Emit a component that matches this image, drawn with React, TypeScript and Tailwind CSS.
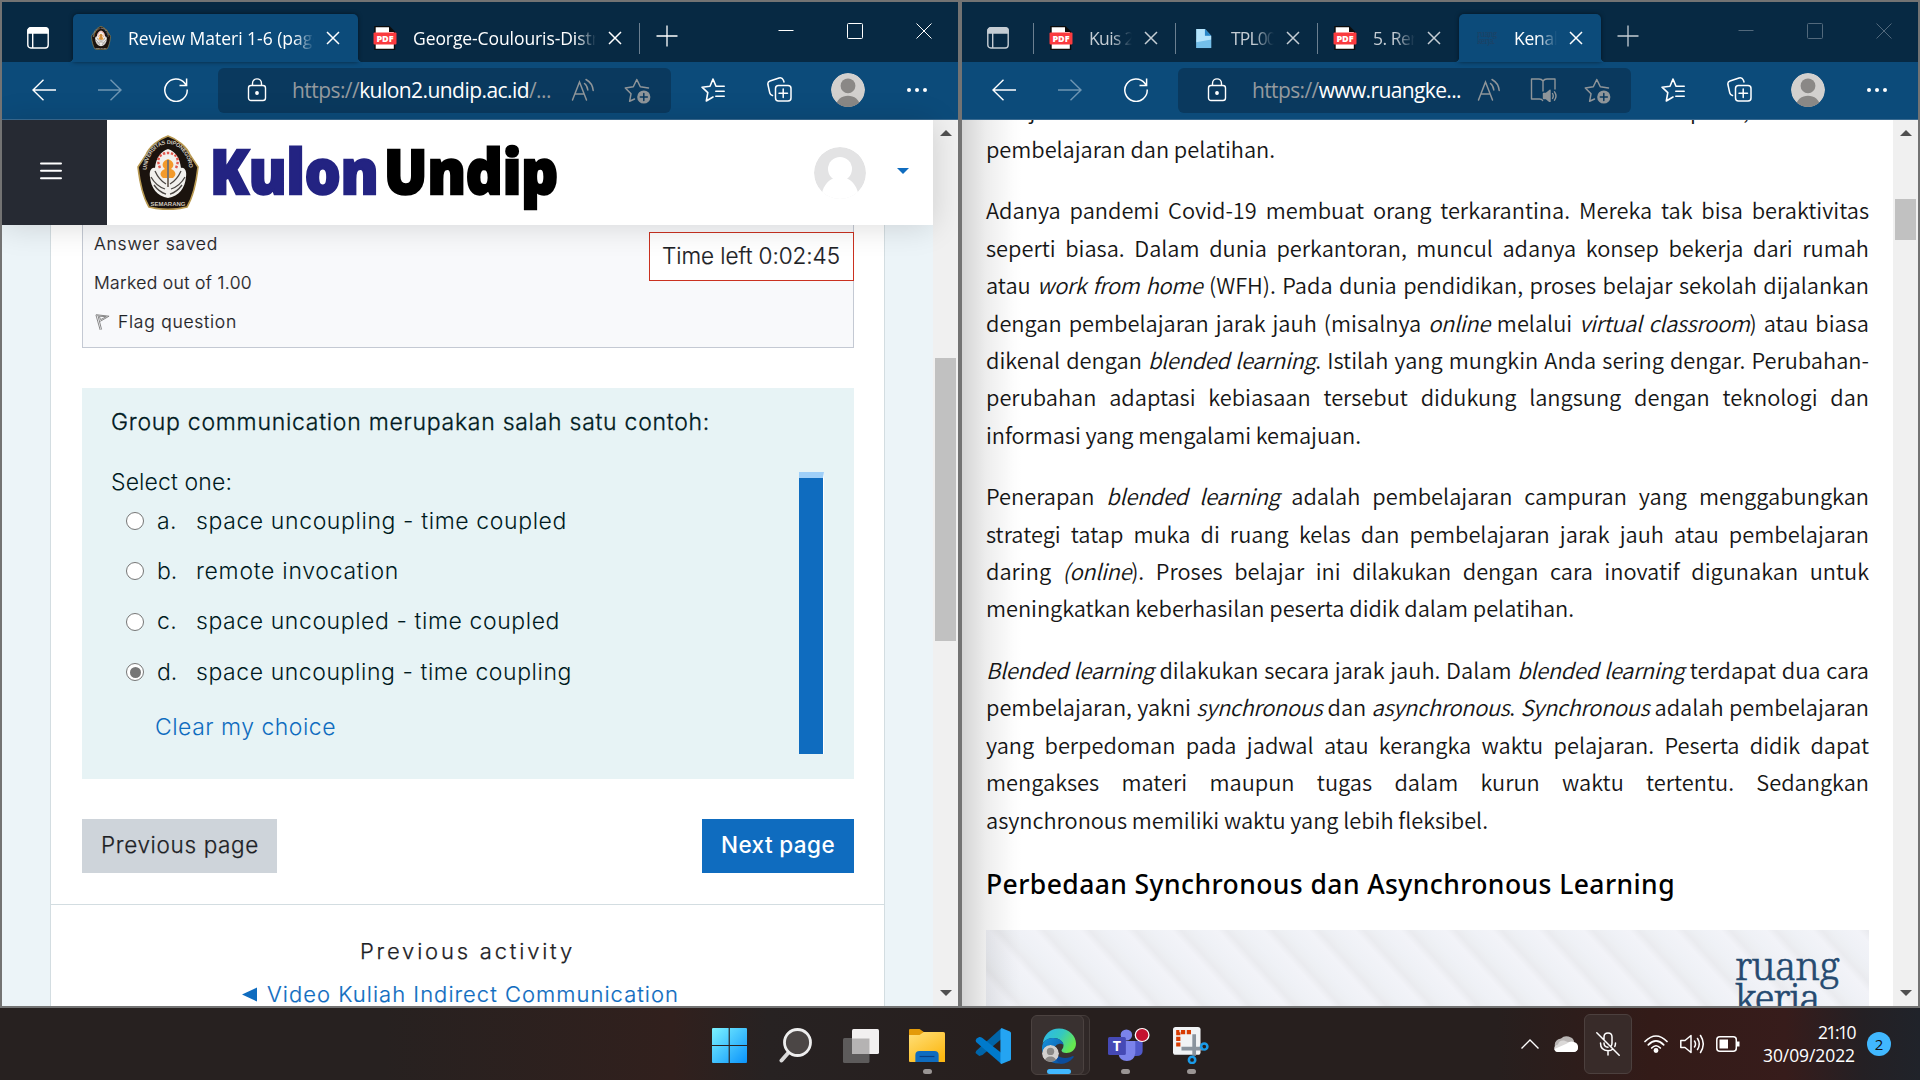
import { useLayoutEffect, useRef, useState, type ReactNode } from "react";

/* Text run whose tracking is computed so that it spans exactly `w` pixels. */
function Fit({ w, className = "", children }: { w: number; className?: string; children: ReactNode }) {
  const ref = useRef<HTMLSpanElement>(null);
  const [ls, setLs] = useState(0);
  useLayoutEffect(() => {
    const el = ref.current;
    if (!el) return;
    const n = (el.textContent || "").length;
    setLs((w - el.getBoundingClientRect().width) / Math.max(1, n));
  }, [w]);
  return (
    <span ref={ref} className={`inline-block whitespace-nowrap ${className}`} style={{ letterSpacing: `${ls}px` }}>
      {children}
    </span>
  );
}

function Crest({ className }: { className: string }) {
  return (
    <svg viewBox="0 0 62 75" className={className}>
      <defs>
        <path id="crestArc" d="M9.500 35 C10.500 20 20 9 31 9 C42 9 51.500 20 52.500 35" />
      </defs>
      <path d="M31 1 C40 4 50 12 53 20 L61 32 C59 50 56 62 50 72 C38 75 24 75 12 72 C6 62 3 50 1 32 L9 20 C12 12 22 4 31 1Z" fill="#1b130e" stroke="#b99a52" strokeWidth="1.6" />
      <path d="M31 14 C24 16 19 23 18 33 C14 32 12 37 13 42 C14 53 20 61 31 63 C42 61 48 53 49 42 C50 37 48 32 44 33 C43 23 38 16 31 14Z" fill="#f2f0ed" />
      <path d="M18 36 q4 9 11 13 M14 42 q5 9 14 12 M17 50 q5 7 12 9 M44 36 q-4 9-11 13 M48 42 q-5 9-14 12 M45 50 q-5 7-12 9" stroke="#4a4542" strokeWidth="1.3" fill="none" />
      <path d="M23 33 C18 22 25 18 31 18 C37 18 44 22 39 33" fill="none" stroke="#e2574c" strokeWidth="2.4" strokeDasharray="2.4 1.6" />
      <path d="M31 24 C25 26 24 31 28 34 C23 36 22 40 26 43 L36 43 C40 40 39 36 34 34 C38 31 37 26 31 24Z" fill="#f39a2b" />
      <path d="M31 25 V52" stroke="#7d746c" strokeWidth="2" />
      <text fontFamily="Liberation Sans" fontSize="5.6" fontWeight="700" fill="#cfc8bf">
        <textPath href="#crestArc" textLength="72">UNIVERSITAS DIPONEGORO</textPath>
      </text>
      <text x="31" y="70.500" textAnchor="middle" fontFamily="Liberation Sans" fontSize="6" fontWeight="700" fill="#cfc8bf">SEMARANG</text>
    </svg>
  );
}

const PdfIcon = () => (
  <svg viewBox="0 0 24 24" className="mr-[2px] h-6 w-6">
    <path d="M2 0.5H16L21.5 6V23.5H2Z" fill="#fff" stroke="#0a0a0a" strokeWidth="1.4" />
    <path d="M16 0.5V6H21.5Z" fill="#0a0a0a" />
    <rect x="0.5" y="6.5" width="23" height="12" rx="1" fill="#fb3b3f" />
    <text x="12" y="16" textAnchor="middle" textLength="17" fontFamily="Open Sans" fontWeight="800" fontSize="9" fill="#fff">PDF</text>
  </svg>
);

const FileIcon = () => (
  <svg viewBox="0 0 18 22" className="h-[21px] w-[18px]">
    <path d="M1 1H10L16.5 8V21H1Z" fill="#8fd3f7" />
    <path d="M1 12H16.5V21H1Z" fill="#74bfea" />
    <path d="M1 1H10V8H16.5V12L1 15Z" fill="#b5e4fc" />
    <path d="M10 1L16.5 8H10Z" fill="#2a86c8" />
  </svg>
);

const RuangFav = () => (
  <svg viewBox="0 0 20 16" className="h-4 w-5 font-['Noto_Serif','Liberation_Serif',serif]" fill="#1e4163">
    <text x="0" y="6.500" fontSize="8" textLength="20">ruang</text>
    <text x="0" y="14" fontSize="8" textLength="18">kerja.</text>
  </svg>
);

const CloseX = () => (
  <svg viewBox="0 0 14 14" className="h-[14px] w-[14px]" fill="none" stroke="currentColor" strokeWidth="1.5">
    <path d="M1 1L13 13M13 1L1 13" />
  </svg>
);

function Tab({ icon, title, active, divider, w }: { icon: ReactNode; title: ReactNode; active?: boolean; divider?: boolean; w: string }) {
  return (
    <div className={`relative flex h-12 shrink-0 items-center ${w} ${active ? "rounded-t-[5px] bg-[#0c4b7a] text-white shadow-[0_0_4px_rgba(0,0,0,0.5)]" : ""}`}>
      {active && <span className="absolute bottom-0 -left-[5px] h-[5px] w-[5px] bg-[radial-gradient(circle_at_0_0,transparent_5px,#0c4b7a_5.5px)]" />}
      {active && <span className="absolute -right-[5px] bottom-0 h-[5px] w-[5px] bg-[radial-gradient(circle_at_100%_0,transparent_5px,#0c4b7a_5.5px)]" />}
      <div className="flex w-[55px] shrink-0 justify-center">{icon}</div>
      <div className="min-w-0 flex-1 overflow-hidden text-[17.5px] leading-6 whitespace-nowrap [mask-image:linear-gradient(to_right,black_calc(100%-20px),transparent)]">{title}</div>
      <div className="flex w-[44px] shrink-0 justify-center pr-[6px]">
        <CloseX />
      </div>
      {divider && <span className="absolute top-[9px] right-0 h-[31px] w-px bg-[#6b7f90]" />}
    </div>
  );
}

const ReadAloud = () => (
  <svg viewBox="0 0 24 24" className="h-6 w-6" fill="none" stroke="#8f9599" strokeWidth="1.5" strokeLinecap="round">
    <path d="M1.5 22L8.5 4L15.5 22M4 16H13" />
    <path d="M13.5 5.5C15.5 7 16.5 9 16.8 12M15 1.5C19.5 4 21.8 8 22.2 12.5" />
  </svg>
);

const StarAdd = () => (
  <svg viewBox="0 0 27 26" className="h-[26px] w-[27px]" fill="none" stroke="#8f9599" strokeWidth="1.5" strokeLinejoin="round" strokeLinecap="round">
    <path d="M24.5 10L16.3 8.8L12.8 1.5L9.3 8.8L1.3 10L7 15.8L5.6 23.3L10.5 21" />
    <circle cx="19.8" cy="19" r="6.6" fill="#8f9599" stroke="none" />
    <path d="M19.8 15.5V22.5M16.3 19H23.3" stroke="#0b395e" />
  </svg>
);

const Book = () => (
  <svg viewBox="0 0 27 24" className="h-6 w-[27px]" fill="none" stroke="#8f9599" strokeWidth="1.4" strokeLinejoin="round" strokeLinecap="round">
    <path d="M13 3C12 1.5 10.5 1 9 1H1.5V21H9.5C11 21 12.2 21.5 12.6 22.5M13 3V13M13 3C14 1.5 15.5 1 17 1H25V11" />
    <path d="M13.5 15.5H16L20 12.2V23.8L16 20.5H13.5Z" fill="#8f9599" />
    <path d="M22.5 15.5Q24 18 22.5 20.5M24.5 13.8Q27.5 18 24.5 22.2" />
  </svg>
);

const Person = ({ size }: { size: string }) => (
  <svg viewBox="0 0 34 34" className={`rounded-full ${size}`}>
    <circle cx="17" cy="17" r="17" fill="#d2d0ce" />
    <circle cx="17" cy="12.8" r="7.4" fill="#8a8886" />
    <path d="M5 34C5 19 29 19 29 34Z" fill="#8a8886" />
  </svg>
);

function Browser({ tabs, url, right }: { tabs: ReactNode; url: ReactNode; right?: boolean }) {
  return (
    <div className={`shrink-0 font-['Open_Sans',sans-serif] ${right ? "text-[#c5cdd4]" : "text-white"}`}>
      <div className="flex h-[60px] bg-[#072943] pt-3">
        <div className="flex h-12 w-[71px] shrink-0 items-center justify-center">
          <svg viewBox="0 0 22 22" className="h-[22px] w-[22px]" fill="none" stroke="currentColor" strokeWidth="1.4">
            <rect x="0.8" y="0.8" width="20.4" height="20.2" rx="3" />
            <path d="M1 6V3.5Q1 1 3.5 1H18.5Q21 1 21 3.5V6Z" fill="currentColor" />
            <path d="M5.7 6V21" />
          </svg>
        </div>
        {tabs}
        <div className="flex h-12 w-[54px] shrink-0 items-center justify-center pb-1">
          <svg viewBox="0 0 22 22" className="h-[22px] w-[22px]" stroke="currentColor" strokeWidth="1.3">
            <path d="M11 0.5V21.5M0.5 11H21.5" />
          </svg>
        </div>
        <div className={`ml-auto flex h-[34px] items-center ${right ? "text-[#52697c]" : ""}`}>
          <svg viewBox="0 0 16 16" className="mr-[53px] h-4 w-4" stroke="currentColor">
            <path d="M0.5 7.5H15.5" />
          </svg>
          <svg viewBox="0 0 16 16" className="mr-[53px] h-4 w-4" fill="none" stroke="currentColor">
            <rect x="0.5" y="0.5" width="15" height="15" rx="1" />
          </svg>
          <svg viewBox="0 0 16 16" className="mr-[26px] h-4 w-4" stroke="currentColor">
            <path d="M0.5 0.5L15.5 15.5M15.5 0.5L0.5 15.5" />
          </svg>
        </div>
      </div>
      <div className="flex h-[58px] items-center border-b border-[#3a6a90] bg-[#0c4b7a] pb-0.5 pl-[9px] text-white">
        <div className="flex w-[66px] justify-center">
          <svg viewBox="0 0 24 22" className="h-[22px] w-6" fill="none" stroke="currentColor" strokeWidth="1.4">
            <path d="M24 11H1M11.5 0.8L1 11L11.5 21.2" />
          </svg>
        </div>
        <div className="flex w-[66px] justify-center text-[#6f96b3]">
          <svg viewBox="0 0 24 22" className="h-[22px] w-6" fill="none" stroke="currentColor" strokeWidth="1.4">
            <path d="M0 11H23M12.5 0.8L23 11L12.5 21.2" />
          </svg>
        </div>
        <div className="mr-[9px] flex w-[66px] justify-center">
          <svg viewBox="0 0 24 24" className="h-6 w-6" fill="none" stroke="currentColor" strokeWidth="1.5">
            <path d="M23.2 11.5A11.2 11.2 0 1 1 20.8 5.2L22.5 7.5M22.6 0.5V7.5H15.5" />
          </svg>
        </div>
        <div className="mt-px flex h-[45px] w-[453px] items-center rounded-[6px] bg-[#0a395e]">
          <div className="flex w-[74px] shrink-0 justify-center pb-px pl-1">
            <svg viewBox="0 0 20 24" className="h-6 w-5" fill="none" stroke="currentColor" strokeWidth="1.4">
              <rect x="1.5" y="7.5" width="17" height="15" rx="2.5" />
              <path d="M5.5 7.5V5.5C5.5 -0.7 14.5 -0.7 14.5 5.5V7.5" />
              <circle cx="10" cy="15" r="1.2" fill="currentColor" />
            </svg>
          </div>
          <div className="flex-1 text-[21px] leading-8 whitespace-nowrap text-[#949a9f]">{url}</div>
          <div className="flex w-[54px] justify-center pb-px">
            <ReadAloud />
          </div>
          {right && (
            <div className="flex w-[54px] justify-center">
              <Book />
            </div>
          )}
          <div className="mr-[7px] flex w-[54px] justify-center pt-0.5">
            <StarAdd />
          </div>
        </div>
        <div className="ml-[9px] flex w-[66px] justify-center">
          <svg viewBox="0 0 24 24" className="h-6 w-6" fill="none" stroke="currentColor" strokeWidth="1.6" strokeLinejoin="round" strokeLinecap="round">
            <path d="M15 8.2L12 1L9 8.2L1 9.2L6.8 14.6L5.3 23L12 19M15 8.2H23.2M14.8 13.2H23.2M14.8 18.2H23.2" />
          </svg>
        </div>
        <div className="flex w-[66px] justify-center">
          <svg viewBox="0 0 25 25" className="h-[25px] w-[25px]" fill="none" stroke="currentColor" strokeWidth="1.5" strokeLinejoin="round" strokeLinecap="round">
            <rect x="8.5" y="8.5" width="15.5" height="15.5" rx="3" />
            <path d="M16.2 12V20.5M12 16.2H20.5M5.5 18.5C4 18 3 17 2.8 16L0.9 7.5C0.6 5.5 1.5 4.5 3 4L12 1C14 0.4 15.5 1.2 16.3 3L17 5" />
          </svg>
        </div>
        <div className="flex w-[72px] justify-center">
          <Person size="h-[34px] w-[34px]" />
        </div>
        <div className="flex w-[66px] justify-center gap-[4px]">
          <span className="h-1 w-1 rounded-full bg-white" />
          <span className="h-1 w-1 rounded-full bg-white" />
          <span className="h-1 w-1 rounded-full bg-white" />
        </div>
      </div>
    </div>
  );
}

function Scrollbar({ thumb }: { thumb: string }) {
  return (
    <div className="relative flex w-[25px] shrink-0 flex-col items-center justify-between bg-[#f0f0f0] py-2.5">
      <svg viewBox="0 0 12 6" className="h-1.5 w-3">
        <path d="M6 0L12 6H0Z" fill="#505050" />
      </svg>
      <div className={`absolute left-[2px] w-[21px] bg-[#c1c1c1] ${thumb}`} />
      <svg viewBox="0 0 12 6" className="h-1.5 w-3">
        <path d="M6 6L12 0H0Z" fill="#505050" />
      </svg>
    </div>
  );
}

const options: [string, string, number, boolean][] = [
  ["a.", "space uncoupling - time coupled", 371, false],
  ["b.", "remote invocation", 203, false],
  ["c.", "space uncoupled - time coupled", 364, false],
  ["d.", "space uncoupling - time coupling", 376, true],
];

function Quiz() {
  return (
    <div className="flex min-h-0 flex-1 flex-col bg-[#ecf4f8] font-['Inter',sans-serif] font-light text-[#1d2125]">
      <header className="relative z-10 flex h-[105px] shrink-0 items-center bg-white shadow-[0_2px_30px_rgba(0,0,0,0.14)]">
        <div className="flex h-full w-[105px] items-center justify-center bg-[#262a33] pr-[8px]">
          <svg viewBox="0 0 22 18" className="mt-[-4px] h-[18px] w-[22px]" stroke="#fff" strokeWidth="2" strokeLinecap="round">
            <path d="M1 1.5H21M1 8.8H21M1 16.3H21" />
          </svg>
        </div>
        <Crest className="ml-[30px] h-[75px] w-[62px]" />
        <div className="ml-[11px] flex h-full w-[360px] pt-[4px] font-['Open_Sans',sans-serif] text-[62px] leading-[93px] font-extrabold whitespace-nowrap">
          <div className="w-[174px]">
            <span className="inline-block origin-left scale-x-[0.91] text-[#232382] [-webkit-text-stroke:2.5px_#232382]">Kulon</span>
          </div>
          <span className="inline-block origin-left scale-x-[0.925] text-black [-webkit-text-stroke:2.5px_black]">Undip</span>
        </div>
        <svg viewBox="0 0 52 52" className="ml-auto h-[52px] w-[52px] rounded-full">
          <circle cx="26" cy="26" r="26" fill="#e3e3e4" />
          <circle cx="26" cy="22" r="12" fill="#fff" />
          <path d="M7 52C8 40 13 34 20 31H32C39 34 44 40 45 52Z" fill="#fff" />
        </svg>
        <svg viewBox="0 0 12 6" className="mr-6 mb-[3px] ml-[31px] h-1.5 w-3">
          <path d="M0 0H12L6 6Z" fill="#0f6cbf" />
        </svg>
      </header>
      <main className="mr-[48px] ml-[48px] flex min-h-0 flex-1 flex-col border-x border-[#d3dde1] bg-white">
        <section className="relative mr-[30px] ml-[31px] h-[123px] shrink-0 border border-t-0 border-[#c4c9d3] bg-[#f8f9fb] pl-[11px] text-[17.5px] leading-[39px] font-[350] [-webkit-text-stroke:0.2px_#1d2125]">
          <div className="-mt-px"><Fit w={124}>Answer saved</Fit></div>
          <div><Fit w={158}>Marked out of 1.00</Fit></div>
          <div className="flex items-center">
            <svg viewBox="0 0 16 18" className="mr-2 ml-px h-[18px] w-[15px]" fill="none" stroke="#808080" strokeWidth="1">
              <path d="M1 1.5L5.5 17.5M3 1.5L7 17M1 1.2L15 2.8L5.5 8.3M4.5 2.8L6 6.5L12 3.3Z" />
            </svg>
            <Fit w={119}>Flag question</Fit>
          </div>
          <div className="absolute top-[7px] -right-px flex h-[49px] w-[205px] items-center border border-[#ca3120] bg-white pl-3 text-[22.5px] leading-none">
            <Fit w={178}>Time left 0:02:45</Fit>
          </div>
        </section>
        <section className="relative mr-[30px] ml-[31px] mt-10 h-[391px] shrink-0 bg-[#e7f3f5] pt-[14px] pl-[29px] text-[23px] text-[#001a1e]">
          <div className="leading-10 font-[350] [-webkit-text-stroke:0.3px_#001a1e]"><Fit w={599}>Group communication merupakan salah satu contoh:</Fit></div>
          <div className="mt-[25px] h-[29px] leading-[30px]"><Fit w={121}>Select one:</Fit></div>
          {options.map(([k, t, w, on]) => (
            <div key={k} className="flex h-[50.3px] items-center pl-[15px]">
              <span className="flex h-[18px] w-[18px] items-center justify-center rounded-full border border-[#767676] bg-white">
                {on && <span className="h-[11px] w-[11px] rounded-full bg-[#767676]" />}
              </span>
              <span className="w-[52px] pl-[13px]"><Fit w={20}>{k}</Fit></span>
              <Fit w={w}>{t}</Fit>
            </div>
          ))}
          <div className="h-[60px] pl-[44px] leading-[60px] text-[#0f6cbf]"><Fit w={181}>Clear my choice</Fit></div>
          <div className="absolute top-[84px] right-[30px] h-[282px] w-[25px] border-t-[6px] border-r border-t-[#9fcff8] border-r-white bg-[#0f6cbf]" />
        </section>
        <div className="mr-[30px] ml-[31px] mt-10 flex h-[54px] shrink-0 justify-between text-[22.5px] leading-[52px] font-[350]">
          <div className="w-[195px] bg-[#ced4da] pl-[19px] [-webkit-text-stroke:0.25px_#1d2125]"><Fit w={158}>Previous page</Fit></div>
          <div className="w-[152px] bg-[#0f6cbf] pl-[19px] font-medium text-white"><Fit w={114}>Next page</Fit></div>
        </div>
        <div className="mt-[31px] border-t border-[#d3dde1] pt-[25px] text-center text-[22px] font-[350]">
          <div className="leading-[42px] [-webkit-text-stroke:0.25px_#1d2125]"><Fit w={215}>Previous activity</Fit></div>
          <div className="flex h-[44px] items-center justify-center pr-[14px] leading-[44px] text-[#0f6cbf] [-webkit-text-stroke:0.2px_#0f6cbf]">
            <svg viewBox="0 0 16 15" className="mr-[10px] h-[15px] w-[15px]"><path d="M0 7.5L16 0V15Z" fill="#0f6cbf" /></svg>
            <Fit w={412}>Video Kuliah Indirect Communication</Fit>
          </div>
        </div>
      </main>
    </div>
  );
}

const Em = ({ children }: { children: ReactNode }) => <em className="tracking-[-0.3px]">{children}</em>;

const paragraphs: ReactNode[][] = [
  [
    "Adanya pandemi Covid-19 membuat orang terkarantina. Mereka tak bisa beraktivitas",
    "seperti biasa. Dalam dunia perkantoran, muncul adanya konsep bekerja dari rumah",
    <>atau <Em>work from home</Em> (WFH). Pada dunia pendidikan, proses belajar sekolah dijalankan</>,
    <>dengan pembelajaran jarak jauh (misalnya <Em>online</Em> melalui <Em>virtual classroom</Em>) atau biasa</>,
    <>dikenal dengan <Em>blended learning</Em>. Istilah yang mungkin Anda sering dengar. Perubahan-</>,
    "perubahan adaptasi kebiasaan tersebut didukung langsung dengan teknologi dan",
    "informasi yang mengalami kemajuan.",
  ],
  [
    <>Penerapan <Em>blended learning</Em> adalah pembelajaran campuran yang menggabungkan</>,
    "strategi tatap muka di ruang kelas dan pembelajaran jarak jauh atau pembelajaran",
    <>daring <Em>(online</Em>). Proses belajar ini dilakukan dengan cara inovatif digunakan untuk</>,
    "meningkatkan keberhasilan peserta didik dalam pelatihan.",
  ],
  [
    <><Em>Blended learning</Em> dilakukan secara jarak jauh. Dalam <Em>blended learning</Em> terdapat dua cara</>,
    <>pembelajaran, yakni <Em>synchronous</Em> dan <Em>asynchronous</Em>. <Em>Synchronous</Em> adalah pembelajaran</>,
    "yang berpedoman pada jadwal atau kerangka waktu pelajaran. Peserta didik dapat",
    "mengakses materi maupun tugas dalam kurun waktu tertentu. Sedangkan",
    "asynchronous memiliki waktu yang lebih fleksibel.",
  ],
];
const lastWidths = [375, 588, 502];

function Article() {
  return (
    <div className="relative min-h-0 flex-1 overflow-hidden bg-white pr-[24px] pl-6 font-['Noto_Sans_CJK_SC',sans-serif] text-[21.8px] leading-[37.42px] font-[350] text-[#161616]">
      <div className="-mt-[29.4px] mb-[2px] flex h-[37.4px] justify-between whitespace-nowrap">
        <span className="w-[702px] [text-align-last:justify]">belajar ini sudah bisa dilakukan melalui akses internet dan media komputer,</span>
        <span>serta di dalam</span>
      </div>
      <div><Fit w={289}>pembelajaran dan pelatihan.</Fit></div>
      {paragraphs.map((lines, i) => (
        <div key={i} className="mt-6">
          {lines.map((l, j) =>
            j < lines.length - 1 ? (
              <div key={j} className="h-[37.42px] [text-align-last:justify] whitespace-nowrap">{l}</div>
            ) : (
              <div key={j} className="h-[37.42px]"><Fit w={lastWidths[i]}>{l}</Fit></div>
            )
          )}
        </div>
      ))}
      <h2 className="mt-[27px] font-['Noto_Sans',sans-serif] text-[26.5px] leading-[38px] font-medium text-black">
        <Fit w={689}>Perbedaan Synchronous dan Asynchronous Learning</Fit>
      </h2>
      <div className="mt-[27px] flex h-[120px] justify-end bg-[repeating-linear-gradient(48deg,#eff1f6_0px,#f2f3f8_14px,#eaebef_21px,#edeff3_27px,#eff1f6_34px)] pt-[19px] pr-[29px]">
        <div className="w-[105px] font-['Noto_Serif','Liberation_Serif',serif] text-[39px] leading-[32px] text-[#254a70] [-webkit-text-stroke:0.6px_#254a70]">
          <Fit w={104}>ruang</Fit>
          <Fit w={84}>kerja</Fit>
        </div>
      </div>
      <div className="absolute inset-y-0 left-0 w-[60px] bg-[linear-gradient(to_right,rgba(0,0,0,0.17),rgba(0,0,0,0.07)_40%,rgba(0,0,0,0.01)_85%,transparent)]" />
    </div>
  );
}

function TaskIcon({ children, dot }: { children: ReactNode; dot?: boolean }) {
  return (
    <div className="relative flex h-[72px] w-[66px] shrink-0 items-center justify-center pt-[3px]">
      {children}
      {dot && <span className="absolute top-[61px] left-1/2 -ml-1 h-[5px] w-[9px] rounded-full bg-[#9a9594]" />}
    </div>
  );
}

function Taskbar() {
  return (
    <footer className="flex h-[72px] shrink-0 items-center bg-[linear-gradient(to_right,#272120_0%,#272120_20%,#31201d_35%,#272222_40%,#271f1e_52%,#271f1e_78%,#331b18_86%,#371c1b_93%,#242024_97%,#20232a_100%)]">
      <div className="ml-[696px] flex">
        <TaskIcon>
          <svg viewBox="0 0 33 35" preserveAspectRatio="none" className="h-[35px] w-[35px]">
            <defs>
              <linearGradient id="win" x1="0" y1="0" x2="1" y2="1"><stop offset="0" stopColor="#7cf3ff" /><stop offset="1" stopColor="#0a93fb" /></linearGradient>
            </defs>
            <path d="M1 0H15.7V17H0V1Q0 0 1 0ZM16.8 0H32Q33 0 33 1V17H16.8ZM0 18H15.7V35H1Q0 35 0 34ZM16.8 18H33V34Q33 35 32 35H16.8Z" fill="url(#win)" />
          </svg>
        </TaskIcon>
        <TaskIcon>
          <svg viewBox="0 0 33 35" className="h-[35px] w-[33px]" fill="none">
            <path d="M10 24L2.5 32.5" stroke="#d9d9d9" strokeWidth="4" strokeLinecap="round" />
            <circle cx="18.500" cy="14.500" r="13" fill="#4b4645" stroke="#eee" strokeWidth="2.800" />
          </svg>
        </TaskIcon>
        <TaskIcon>
          <svg viewBox="0 0 34 34" preserveAspectRatio="none" className="h-[34px] w-9">
            <rect x="0" y="9" width="25" height="25" rx="1.5" fill="#5d5b5b" />
            <rect x="8.5" y="0" width="25.5" height="25" rx="1.5" fill="#f2f0f0" />
            <path d="M8.5 9.5H25V25H10Q8.5 25 8.5 23.5Z" fill="#b5b3b3" />
          </svg>
        </TaskIcon>
        <TaskIcon dot>
          <svg viewBox="0 0 34 33" preserveAspectRatio="none" className="h-[33px] w-9">
            <defs>
              <linearGradient id="fold" x1="0" y1="0" x2="0.7" y2="1"><stop offset="0" stopColor="#ffe07a" /><stop offset="1" stopColor="#fcb813" /></linearGradient>
            </defs>
            <path d="M0 8V1Q0 0 1 0H10L14 3H32Q34 3 34 5V8Z" fill="#e39b0a" />
            <path d="M0 6H10L14 3H32Q34 3 34 5V33H1Q0 33 0 32Z" fill="url(#fold)" />
            <path d="M6 33V26Q6 22 10 22H24Q28 22 28 26V33Z" fill="#0f6cbf" />
            <path d="M10 27.5H24" stroke="#0b3f80" strokeWidth="1.2" />
          </svg>
        </TaskIcon>
        <TaskIcon>
          <svg viewBox="0 0 34 36" preserveAspectRatio="none" className="h-9 w-9">
            <path d="M25 0L4 20L1 23L0.5 25L4 28L7 27L25 11Z" fill="#0065a9" />
            <path d="M25 36L1 14Q0 12 1.5 10.5L4 9Q5 8.5 7 10L25 25Z" fill="#007acc" />
            <path d="M25 0L33 3.5Q34 4 34 5V31Q34 32 33 32.5L25 36Q24 36 24 34V2Z" fill="#24a4f2" />
          </svg>
        </TaskIcon>
        <div className="relative flex h-[72px] w-[66px] shrink-0 items-center justify-center pt-[3px]">
          <span className="absolute top-[7px] left-[14px] h-[60px] w-[50px] rounded-[6px] border border-[#443c3a] bg-[#302827]" />
          <span className="absolute top-[7px] left-[5px] h-[60px] w-[53px] rounded-[6px] border border-[#4b4240] bg-[#393130]" />
          <svg viewBox="0 0 36 36" className="relative h-9 w-9">
            <defs>
              <linearGradient id="edgeA" x1="0" y1="0" x2="1" y2="0.5"><stop offset="0" stopColor="#2bb5ee" /><stop offset="0.55" stopColor="#35c8c0" /><stop offset="1" stopColor="#66e84f" /></linearGradient>
              <linearGradient id="edgeB" x1="0" y1="0" x2="1" y2="1"><stop offset="0" stopColor="#1593de" /><stop offset="1" stopColor="#0a4e9e" /></linearGradient>
            </defs>
            <path d="M1.500 16C3 6 9.500 0.500 18 0.500C28 0.500 35 8 35 15.500C35 22 30 25 25.500 25C22 25 20.500 23.500 20.500 22.500C20.500 21.500 22.500 20.500 22.500 17.500C22.500 13 17 9.500 11.500 10C6 10.500 2.500 13.500 1.500 16Z" fill="url(#edgeA)" />
            <path d="M1 20C1 13.500 6 10 11.500 10C17 9.500 22.500 13 22.500 17C20 14.500 13.500 16 13 22C12.500 28 17 34 23 35C10 38 1 29 1 20Z" fill="url(#edgeB)" />
            <path d="M13 22C13 26 18 30 24 30C28 30 30.500 28.500 32 28C33 28 33 29 32 30C29 34 24 36 19.500 35.800C15 33 12.500 27 13 22Z" fill="#0c4d9c" />
          </svg>
          <span className="absolute top-[37px] left-[16px]"><Person size="h-[17px] w-[17px]" /></span>
          <span className="absolute top-[61px] left-[21px] h-[5px] w-[24px] rounded-full bg-[#41b8ff]" />
        </div>
        <div className="relative flex h-[72px] w-[66px] shrink-0 items-center justify-center pt-[2px] pl-[7px]">
          <svg viewBox="0 0 40 36" preserveAspectRatio="none" className="h-9 w-[42px]">
            <circle cx="17.500" cy="8" r="5.500" fill="#7b83eb" />
            <path d="M22 14H33V24Q33 29 27 29H24Z" fill="#5059c9" />
            <path d="M10 14H26V26Q25 34 18 34Q11 34 10 27Z" fill="#7b83eb" />
            <rect x="0" y="10" width="17" height="18" rx="1.500" fill="#4549b5" />
            <text x="8.500" y="24" textAnchor="middle" fontFamily="Open Sans" fontWeight="700" fontSize="13.500" fill="#fff">T</text>
            <circle cx="32.500" cy="8" r="6.500" fill="#c4122f" stroke="#fff" strokeWidth="1.200" />
          </svg>
          <span className="absolute top-[61px] left-[29px] h-[5px] w-[9px] rounded-full bg-[#9a9594]" />
        </div>
        <TaskIcon dot>
          <svg viewBox="0 0 34 36" preserveAspectRatio="none" className="h-[37px] w-9" fill="none">
            <rect x="0" y="0" width="26" height="27" rx="2.500" fill="#f1f3f5" />
            <path d="M5 19V5H18" stroke="#d83b01" strokeWidth="4" strokeDasharray="4 1.500" />
            <path d="M20 7V28M8 21H28" stroke="#8a949e" strokeWidth="3.500" />
            <circle cx="29.500" cy="19" r="3" stroke="#1a9be8" strokeWidth="2.400" />
            <circle cx="18" cy="32" r="3" stroke="#1a9be8" strokeWidth="2.400" />
          </svg>
        </TaskIcon>
      </div>
      <svg viewBox="0 0 18 10" className="mr-[15px] ml-auto h-2.5 w-[18px]" fill="none" stroke="#fff" strokeWidth="1.4">
        <path d="M0.500 9.500L9 1L17.500 9.500" />
      </svg>
      <svg viewBox="0 0 24 16" className="h-4 w-6">
        <path d="M1 11Q-0.500 4 7 2.500Q11 -1.500 17 1.500Q20 3 20 6L8 13Z" fill="#b9b5b4" />
        <path d="M4 16Q0 16 0.200 12Q0.500 9 4 8.500Q5 4 10 4.500L24 10Q24.500 15.500 20 16Z" fill="#dad8d7" />
        <path d="M4 16Q1 16 0.500 13L13 7.500Q16 4.500 20 6Q24 7 24 11Q24 15.500 20 16Z" fill="#fff" />
      </svg>
      <div className="mr-3 ml-1.5 flex h-[60px] w-12 items-center justify-center rounded-[6px] border border-[#4c403e] bg-[#382b29]">
        <svg viewBox="0 0 24 24" className="h-6 w-6" fill="none" stroke="#fff" strokeWidth="1.500" strokeLinecap="round">
          <path d="M0.800 0.800L23.200 23.200M8 8V5Q8 1 12 1Q16 1 16 5V11Q16 13 15 14.200M8 11Q8 15 12 15.200M4.500 11Q4.500 18.500 12 18.700Q15 18.700 17 17M19.500 11Q19.500 13 18.800 14.500M12 18.700V23" />
        </svg>
      </div>
      <svg viewBox="0 0 24 18" className="mr-3 h-[18px] w-6" fill="none" stroke="#fff" strokeWidth="1.700" strokeLinecap="round">
        <path d="M1 6.500Q12 -4.500 23 6.500M4.300 9.800Q12 2 19.700 9.800M7.700 13Q12 8.500 16.300 13" />
        <circle cx="12" cy="15.500" r="1.600" fill="#fff" />
      </svg>
      <svg viewBox="0 0 24 20" className="mr-3 h-5 w-6" fill="none" stroke="#fff" strokeWidth="1.500" strokeLinejoin="round" strokeLinecap="round">
        <path d="M0.800 6.500H5L11 1.500V18.500L5 13.500H0.800ZM14.500 7Q16.500 10 14.500 13M17.500 4.500Q21 10 17.500 15.500M20.500 1.500Q26 10 20.500 18.500" />
      </svg>
      <svg viewBox="0 0 24 16" className="h-4 w-6" fill="none" stroke="#fff" strokeWidth="1.500">
        <rect x="0.800" y="0.800" width="19.500" height="14.400" rx="3" />
        <rect x="3.500" y="3.500" width="8.500" height="9" fill="#fff" stroke="none" />
        <path d="M22 5.500V10.500" strokeWidth="3" />
      </svg>
      <div className="w-[115px] text-right font-['Open_Sans',sans-serif] text-[17.5px] leading-[23px] text-white">
        <div><Fit w={37}>21:10</Fit></div>
        <div><Fit w={92}>30/09/2022</Fit></div>
      </div>
      <div className="mr-[29px] ml-3 flex h-6 w-6 items-center justify-center rounded-full bg-[#41b8ff] font-['Open_Sans',sans-serif] text-[15px] text-[#111]">2</div>
    </footer>
  );
}

export default function App() {
  return (
    <div className="flex h-[1080px] w-[1920px] flex-col overflow-hidden bg-[#737373]">
      <div className="flex h-[1008px] shrink-0 gap-1 border-2 border-[#737373]">
        <div className="flex w-[956px] flex-col overflow-hidden">
          <Browser
            tabs={
              <>
                <Tab w="w-[285px]" active icon={<Crest className="h-6 w-5" />} title={<Fit w={194}>Review Materi 1-6 (page</Fit>} />
                <Tab w="w-[282px]" divider icon={<PdfIcon />} title={<Fit w={190}>George-Coulouris-Distri</Fit>} />
              </>
            }
            url={<Fit w={259}>https://<span className="text-white">kulon2.undip.ac.id</span>/...</Fit>}
          />
          <div className="flex min-h-0 flex-1">
            <Quiz />
            <Scrollbar thumb="top-[238px] h-[283px]" />
          </div>
        </div>
        <div className="flex w-[956px] flex-col overflow-hidden">
          <Browser
            right
            tabs={
              <>
                <span className="mt-[9px] h-[31px] w-px bg-[#6b7f90]" />
                <Tab w="w-[142px]" divider icon={<PdfIcon />} title={<Fit w={45}>Kuis 2</Fit>} />
                <Tab w="w-[142px]" divider icon={<FileIcon />} title={<Fit w={45}>TPL00</Fit>} />
                <Tab w="w-[141px]" icon={<PdfIcon />} title={<Fit w={44}>5. Rer</Fit>} />
                <Tab w="w-[142px]" active icon={<RuangFav />} title={<Fit w={44}>Kenal</Fit>} />
              </>
            }
            url={<Fit w={209}>https://<span className="text-white">www.ruangke...</span></Fit>}
          />
          <div className="flex min-h-0 flex-1">
            <Article />
            <Scrollbar thumb="top-[79px] h-[41px]" />
          </div>
        </div>
      </div>
      <Taskbar />
    </div>
  );
}
